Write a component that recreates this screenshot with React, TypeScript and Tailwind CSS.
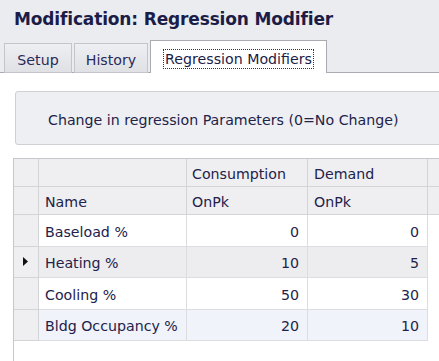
import React from 'react';

const font = { fontFamily: '"DejaVu Sans", Tahoma, sans-serif' };

type Row = { name: string; cons: number; dem: number; bg: string; current?: boolean };

const rows: Row[] = [
  { name: 'Baseload %', cons: 0, dem: 0, bg: 'bg-white' },
  { name: 'Heating %', cons: 10, dem: 5, bg: 'bg-[#ededf0]', current: true },
  { name: 'Cooling %', cons: 50, dem: 30, bg: 'bg-white' },
  { name: 'Bldg Occupancy %', cons: 20, dem: 10, bg: 'bg-[#f0f3f9]' },
];

const HeaderRow: React.FC<{ name: string; cons: string; dem: string }> = ({ name, cons, dem }) => (
  <div className="flex h-[28px] border-b border-[#d3d4d8] bg-[#efeff1]">
    <div className="w-[25px] shrink-0 border-r border-[#d3d4d8]" />
    <div className="w-[148px] shrink-0 border-r border-[#d3d4d8] pl-[6px] pt-[4px] flex items-center">{name}</div>
    <div className="w-[121px] shrink-0 border-r border-[#d3d4d8] pl-[5px] pt-[4px] flex items-center">{cons}</div>
    <div className="w-[120px] shrink-0 border-r border-[#d3d4d8] pl-[6px] pt-[4px] flex items-center">{dem}</div>
    <div className="flex-1" />
  </div>
);

export default function App() {
  return (
    <div className="w-[439px] h-[361px] bg-[#ebecef] overflow-hidden flex flex-col text-[#22224a]" style={font}>
      {/* Title */}
      <div className="h-[41px] shrink-0 pl-[14px] pt-[7px] text-[17px] font-bold text-[#1c1c48] tracking-[-0.15px]">
        Modification: Regression Modifier
      </div>

      {/* Tabs */}
      <div className="h-[32px] shrink-0 flex items-end border-b border-[#a9abb0] text-[14.2px]">
        <div className="ml-[4px] w-[68px] h-[30px] -mb-px border border-[#c3c5ca] bg-gradient-to-b from-[#eeeff2] to-[#e0e1e5] flex items-center justify-center pt-[5px] text-[#2a2a5a]">
          Setup
        </div>
        <div className="ml-[2px] w-[74px] h-[30px] -mb-px border border-[#c3c5ca] bg-gradient-to-b from-[#eeeff2] to-[#e0e1e5] flex items-center justify-center pt-[5px] text-[#2a2a5a]">
          History
        </div>
        <div className="ml-[2px] w-[177px] h-[33px] -mb-px border border-b-0 border-[#a9abb0] bg-white flex items-center justify-center pt-[4px]">
          <span className="border border-dotted border-[#333] px-[1px] leading-[18px] text-[#1c1c48]">Regression Modifiers</span>
        </div>
      </div>

      {/* Content */}
      <div className="flex-1 bg-white flex flex-col text-[14.2px]">
        <div className="ml-[15px] mt-[18px] h-[54px] shrink-0 -mr-[10px] rounded-[3px] border border-[#cfd0d4] bg-[#eeeff2] flex items-center pl-[32px] pt-[5px]">
          Change in regression Parameters (0=No Change)
        </div>

        <div className="ml-[13px] mt-[13px] flex-1 border-l border-[#c6c7cc] flex flex-col">
          <div className="border-t border-[#c6c7cc]">
            <HeaderRow name="" cons="Consumption" dem="Demand" />
            <HeaderRow name="Name" cons="OnPk" dem="OnPk" />
            {rows.map((r) => (
              <div key={r.name} className="flex h-[31.5px]">
                <div className="w-[25px] shrink-0 border-r border-b border-[#d3d4d8] bg-[#efeff1] flex items-center justify-center">
                  {r.current && (
                    <svg width="6" height="9" viewBox="0 0 6 9">
                      <path d="M0 0 L5 4.5 L0 9 Z" fill="#111" />
                    </svg>
                  )}
                </div>
                <div className={`w-[148px] shrink-0 border-r border-b border-[#dcdde1] pl-[6px] pt-[4px] flex items-center ${r.bg}`}>{r.name}</div>
                <div className={`w-[121px] shrink-0 border-r border-b border-[#dcdde1] pr-[8px] pt-[4px] flex items-center justify-end ${r.bg}`}>{r.cons}</div>
                <div className={`w-[120px] shrink-0 border-r border-b border-[#dcdde1] pr-[8px] pt-[4px] flex items-center justify-end ${r.bg}`}>{r.dem}</div>
              </div>
            ))}
          </div>
        </div>
      </div>
    </div>
  );
}
